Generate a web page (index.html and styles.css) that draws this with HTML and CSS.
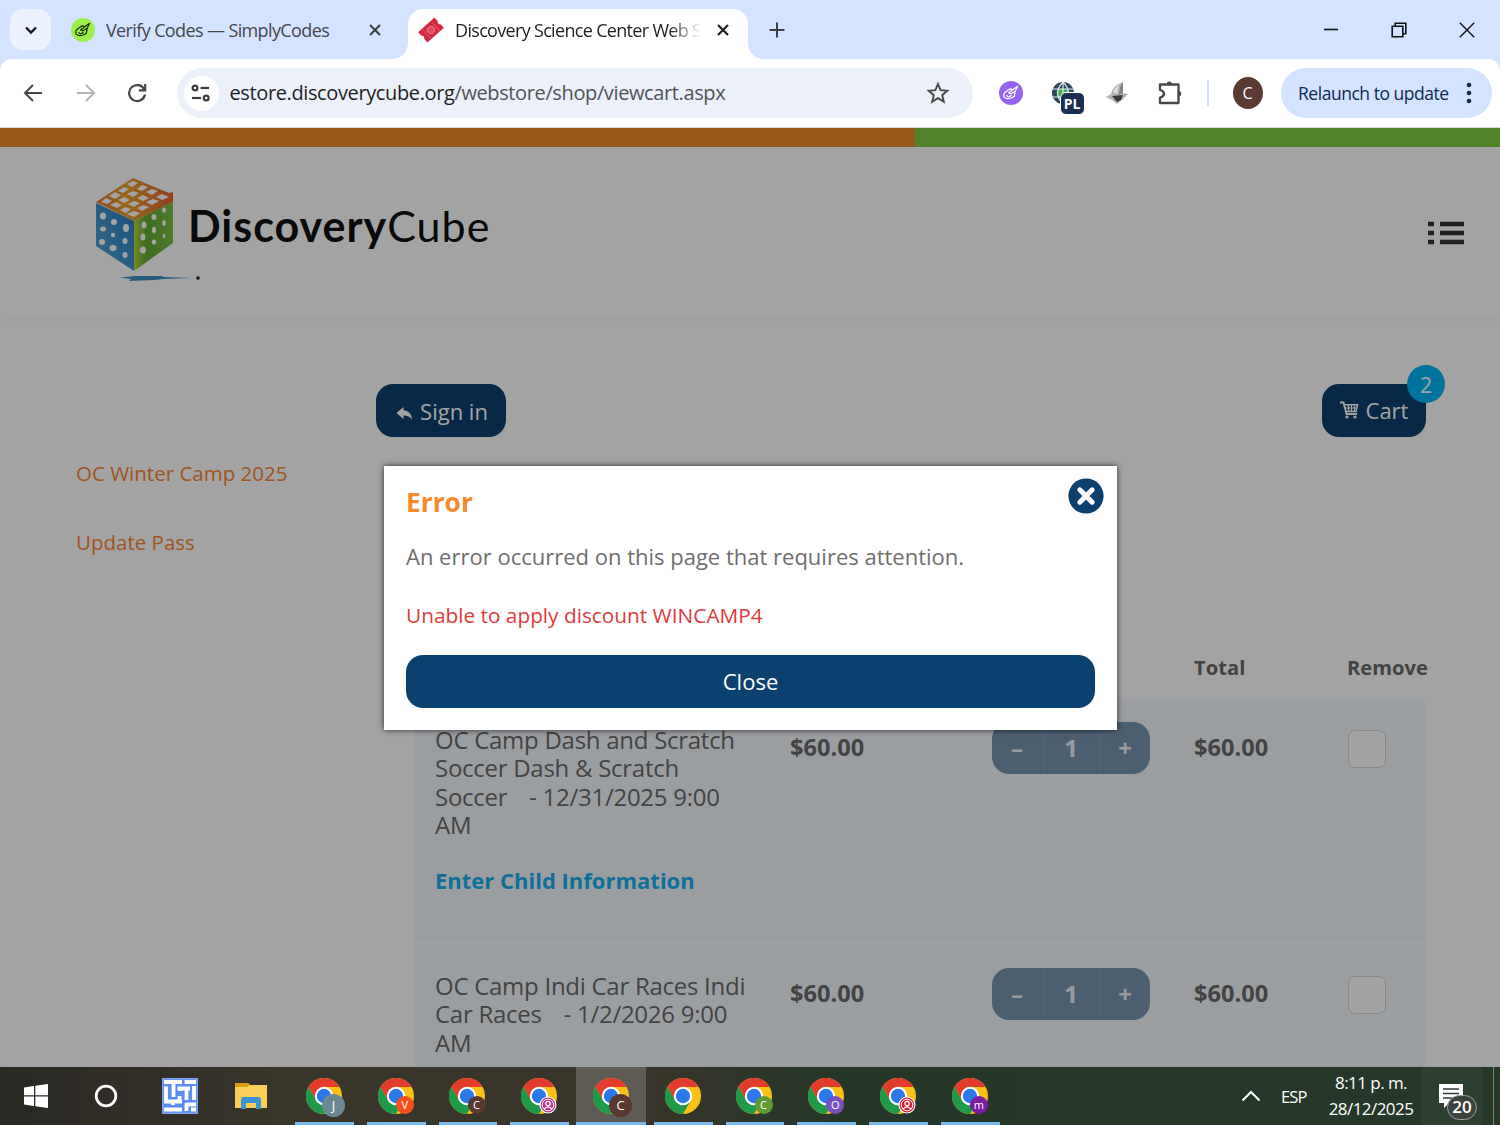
FILE: index.html
```html
<!DOCTYPE html>
<html lang="en">
<head>
  <meta charset="utf-8">
  <title>Discovery Science Center Web Store</title>
  <link rel="stylesheet" href="styles.css">
</head>
<body>
  <!-- shared icons -->
  <svg class="defs" width="0" height="0">
    <symbol id="chrome" viewBox="0 0 36 36">
      <circle cx="18" cy="18" r="18" fill="#fbc116"/>
      <path d="M18 9 H33.6 A18 18 0 0 0 2.4 9 L10.2 22.5 Z" fill="#e33b2e"/>
      <path d="M2.4 9 A18 18 0 0 0 18 36 L25.8 22.5 L10.2 22.5 Z" fill="#1f9a48"/>
      <circle cx="18" cy="18" r="9.2" fill="#fff"/>
      <circle cx="18" cy="18" r="7.2" fill="#2b78e8"/>
    </symbol>
    <symbol id="hand" viewBox="0 0 24 24">
      <path d="M5 11 L11 7 L14 8 L20 4 M20 4 L17 10 L12 13 L9 12 L13 9 M5 11 Q2 14 4 17 Q7 20 12 18 L16 16 L17 10 M7 15 Q9 18 12 15" fill="none" stroke="currentColor" stroke-width="1.5" stroke-linecap="round" stroke-linejoin="round"/>
    </symbol>
    <symbol id="person" viewBox="0 0 18 18">
      <circle cx="9" cy="9" r="8" fill="currentColor" stroke="#fff" stroke-width="1.2"/>
      <circle cx="9" cy="9" r="5.8" fill="none" stroke="#fff"/>
      <circle cx="9" cy="7.6" r="2.2" fill="none" stroke="#fff" stroke-width="1.2"/>
      <path d="M5 13.2 Q9 8.5 13 13.2" fill="none" stroke="#fff" stroke-width="1.2"/>
    </symbol>
  </svg>

  <div class="tabstrip">
    <div class="tab-search">
      <svg width="14" height="10" viewBox="0 0 14 10"><path d="M2 2.5 L7 7.5 L12 2.5" fill="none" stroke="#1c1c1f" stroke-width="2.4"/></svg>
    </div>
    <div class="tab">
      <span class="favicon green"><svg width="20" height="20"><use href="#hand"/></svg></span>
      <span class="tab-title first">Verify Codes — SimplyCodes</span>
      <svg class="tab-close" width="14" height="14" viewBox="0 0 14 14"><path d="M2 2 L12 12 M12 2 L2 12" stroke="#3c4043" stroke-width="2"/></svg>
    </div>
    <div class="tab active">
      <svg class="ticket" width="26" height="26" viewBox="0 0 26 26">
        <g transform="rotate(-42 13 13)">
          <path d="M2 6 H24 V11 A2.2 2.2 0 0 0 24 15 V20 H2 V15 A2.2 2.2 0 0 0 2 11 Z" fill="#d3283f"/>
          <path d="M7 6.500 V19.500 M19 6.500 V19.500" stroke="#de5064" stroke-width="1"/>
          <circle cx="13" cy="13" r="3.5" fill="#e24a5c" stroke="#ea7a88"/>
        </g>
      </svg>
      <span class="tab-title second">Discovery Science Center Web Store</span>
      <svg class="tab-close" width="14" height="14" viewBox="0 0 14 14"><path d="M2 2 L12 12 M12 2 L2 12" stroke="#1f1f1f" stroke-width="2.2"/></svg>
    </div>
    <svg class="new-tab" width="16" height="16" viewBox="0 0 16 16"><path d="M8 .5 V15.5 M.5 8 H15.5" stroke="#3c4043" stroke-width="2"/></svg>
    <div class="window-buttons">
      <svg width="16" height="16" viewBox="0 0 16 16"><path d="M1 7.5 H15" stroke="#111" stroke-width="1.6"/></svg>
      <svg width="16" height="16" viewBox="0 0 16 16"><path d="M1.2 4.2 H11.8 V14.8 H1.2 Z M4.2 4 V1.2 H14.8 V11.8 H12" fill="none" stroke="#111" stroke-width="1.6"/></svg>
      <svg width="16" height="16" viewBox="0 0 16 16"><path d="M.8 .8 L15.2 15.2 M15.2 .8 L.8 15.2" stroke="#111" stroke-width="1.4"/></svg>
    </div>
  </div>

  <div class="toolbar-wrap">
  <div class="toolbar">
    <svg class="nav-icon" width="20" height="20" viewBox="0 0 20 20"><path d="M19 10 H2 M10 2 L2 10 L10 18" fill="none" stroke="#474747" stroke-width="2"/></svg>
    <svg class="nav-icon" width="20" height="20" viewBox="0 0 20 20"><path d="M1 10 H18 M10 2 L18 10 L10 18" fill="none" stroke="#b4b4b4" stroke-width="2"/></svg>
    <svg class="nav-icon" width="20" height="20" viewBox="0 0 20 20"><path d="M16.3 6.500 A8 8 0 1 0 17 11.500 M17.200 1 V7.300 H10.800" fill="none" stroke="#474747" stroke-width="2.2"/></svg>
    <div class="omnibox">
      <span class="site-info">
        <svg width="20" height="18" viewBox="0 0 20 18"><g fill="none" stroke="#3c3c3c" stroke-width="2.200"><circle cx="4" cy="4" r="2.4"/><path d="M9.5 4 H18"/><circle cx="15.200" cy="14" r="2.4"/><path d="M1 14 H10"/></g></svg>
      </span>
      <span class="url"><span class="host">estore.discoverycube.org</span>/webstore/shop/viewcart.aspx</span>
      <svg class="star" width="24" height="24" viewBox="0 0 24 24"><path d="M12 3 L14.6 9.2 L21.3 9.8 L16.2 14.2 L17.8 20.8 L12 17.2 L6.2 20.8 L7.8 14.2 L2.7 9.8 L9.4 9.2 Z" fill="none" stroke="#474747" stroke-width="1.9"/></svg>
    </div>
    <div class="extensions">
      <span class="favicon purple"><svg width="20" height="20"><use href="#hand"/></svg></span>
      <span class="globe">
        <svg width="24" height="24" viewBox="0 0 24 24"><circle cx="12" cy="12" r="11" fill="#2b465d"/><rect x="7" y="8" width="10" height="9" fill="#43b04d"/><path d="M1 8 H23 M1 16 H23 M12 1 V23 M12 1 Q1 12 12 23 M12 1 Q23 12 12 23" fill="none" stroke="#dfe8ee" stroke-width="1.2"/></svg>
        <b>PL</b>
      </span>
      <svg class="mask" width="22" height="26" viewBox="0 0 22 26">
        <path d="M17 2 Q6 6 5 14 L0 17 L6 20 L11 24 L17 19 L22 14 L17 13 Z" fill="#b4b4b4"/>
        <path d="M17 2 Q13 7 13 15 L17 13 Z" fill="#848484"/>
        <path d="M6 16 L17 15 L15 20 L11 22 Z" fill="#3a3a3a"/>
        <path d="M7 12 Q9 7 13 5 L11 14 Z" fill="#ddd"/>
      </svg>
      <svg class="puzzle" width="26" height="26" viewBox="0 0 26 26"><path d="M3 4.500 H21.500 V23 H3 V17.500 Q7 16.500 7 13.700 Q7 11 3 10 Z" fill="none" stroke="#474747" stroke-width="2.3" stroke-linejoin="round"/><path d="M9.500 4 A2.800 3 0 0 1 15 4 Z M22 11 A3 2.800 0 0 1 22 16.500 Z" fill="#474747"/></svg>
      <span class="divider"></span>
      <span class="avatar">C</span>
    </div>
    <div class="relaunch">
      <span>Relaunch to update</span>
      <svg width="6" height="22" viewBox="0 0 6 22"><g fill="#0d2a52"><circle cx="3" cy="3" r="2.3"/><circle cx="3" cy="11" r="2.3"/><circle cx="3" cy="19" r="2.3"/></g></svg>
    </div>
  </div>
  </div>

  <div class="page">
    <div class="stripe"><span></span></div>
    <header>
      <div class="logo">
        <svg width="112" height="106" viewBox="0 0 112 106">
          <defs>
            <linearGradient id="gt" x1="0" x2="1"><stop offset="0" stop-color="#e8762c"/><stop offset=".4" stop-color="#e8a32e"/><stop offset="1" stop-color="#e3652a"/></linearGradient>
            <linearGradient id="gl" x1="0" y1="1" x2="1" y2="0"><stop offset="0" stop-color="#4fa9dc"/><stop offset="1" stop-color="#2f7cba"/></linearGradient>
            <linearGradient id="gr" x1="0" x2="1"><stop offset="0" stop-color="#b4dc3a"/><stop offset=".3" stop-color="#62ac36"/><stop offset="1" stop-color="#7cc043"/></linearGradient>
          </defs>
          <path d="M1 25 L38 1 L74 16 L78 15 L78 25 L39 44 Z" fill="url(#gt)"/>
          <path d="M1 26 L39 44 V94 L1 69 Z" fill="url(#gl)"/>
          <path d="M39 44 L78 25 V66 L39 94 Z" fill="url(#gr)"/>
          <g fill="#fff">
            <path d="M38 4l5 2-6 4-5-3z M47 8l6 2-6 4-5-2z M57 12l6 2-6 4-6-3z M67 17l7 3-7 3-6-3z"/>
            <path d="M29 10l5 2-6 4-5-2z M38 14l6 2-6 4-6-3z M48 18l6 3-6 3-6-3z M58 22l6 2-7 4-6-3z"/>
            <path d="M20 15l6 3-6 4-6-3z M29 20l6 3-6 3-6-3z M39 24l6 2-6 4-6-3z M48 28l6 2-7 4-5-3z"/>
            <path d="M11 21l6 3-5 3-6-2z M21 25l6 3-5 3-7-3z M30 30l6 2-5 4-6-3z M39 34l6 2-6 4-7-3z"/>
            <ellipse cx="8" cy="39" rx="3" ry="3.5"/><ellipse cx="19" cy="45" rx="3" ry="3"/><ellipse cx="31" cy="51" rx="3" ry="4"/>
            <ellipse cx="8" cy="52" rx="3" ry="2.5"/><ellipse cx="18" cy="58" rx="2.2" ry="2.2"/><ellipse cx="30" cy="64" rx="2.5" ry="3"/>
            <ellipse cx="7" cy="65" rx="3" ry="3"/><ellipse cx="18" cy="71" rx="3.5" ry="3"/><ellipse cx="30" cy="78" rx="2.5" ry="3"/>
            <ellipse cx="49" cy="48" rx="2.5" ry="3.5"/><ellipse cx="59" cy="40" rx="2.5" ry="3"/><ellipse cx="69" cy="33" rx="2" ry="2.5"/>
            <ellipse cx="48" cy="60" rx="2.5" ry="3.5"/><ellipse cx="59" cy="53" rx="2" ry="3.2"/><ellipse cx="69" cy="46" rx="1.8" ry="3"/>
            <ellipse cx="48" cy="73" rx="3" ry="3.5"/><ellipse cx="59" cy="65" rx="2.2" ry="2.5"/><ellipse cx="69" cy="59" rx="1.3" ry="2.2"/>
          </g>
          <path d="M25 100.500 L40 99 L68 99 V100 L97 101 L68 102 L60 103 L34 104 L36 102 Z" fill="#3a8fc4"/>
          <circle cx="103" cy="101" r="1.8" fill="#222"/>
        </svg>
        <span class="wordmark"><b>Discovery</b>Cube</span>
      </div>
      <svg class="menu" width="36" height="24" viewBox="0 0 36 24"><path d="M0 3 H6 M12 3 H36 M0 12 H6 M12 12 H36 M0 21 H6 M12 21 H36" stroke="#333" stroke-width="4.600"/></svg>
    </header>

    <main>
      <aside>
        <a>OC Winter Camp 2025</a>
        <a>Update Pass</a>
      </aside>
      <section>
        <div class="actions">
          <div class="btn signin">
            <svg width="17" height="14" viewBox="0 0 17 14"><path d="M.5 7 L7.500 1 V4.300 Q15 4.500 16 13.500 Q13 9.500 7.500 9.600 V13 Z" fill="#fff"/></svg>
            Sign in
          </div>
          <div class="btn cart">
            <svg width="19" height="18" viewBox="0 0 19 18"><path d="M0 1.500 H3.500 L6.500 13 H17" fill="none" stroke="#fff" stroke-width="1.8"/><path d="M4.500 3.800 H17.500 L16 10.500 H6" fill="none" stroke="#fff" stroke-width="1.6"/><path d="M5 7 H17 M8.500 4 V10 M11.500 4 V10 M14.500 4 V10" stroke="#fff" stroke-width="1.2"/><circle cx="7" cy="16" r="1.6" fill="#fff"/><circle cx="15" cy="16" r="1.6" fill="#fff"/></svg>
            Cart
            <span class="badge">2</span>
          </div>
        </div>
        <div class="cart-table">
          <div class="row head">
            <span></span><span></span><span></span><span>Total</span><span>Remove</span>
          </div>
          <div class="row">
            <div class="item">
              <p>OC Camp Dash and Scratch<br>Soccer Dash &amp; Scratch<br>Soccer &nbsp; <span class="date-part">- 12/31/2025 9:00</span><br>AM</p>
              <a>Enter Child Information</a>
            </div>
            <span class="price">$60.00</span>
            <div class="qty"><i>–</i><i>1</i><i>+</i></div>
            <span class="price">$60.00</span>
            <span class="check"></span>
          </div>
          <div class="row">
            <div class="item">
              <p>OC Camp Indi Car Races Indi<br>Car Races &nbsp; <span class="date-part">- 1/2/2026 9:00</span><br>AM</p>
            </div>
            <span class="price">$60.00</span>
            <div class="qty"><i>–</i><i>1</i><i>+</i></div>
            <span class="price">$60.00</span>
            <span class="check"></span>
          </div>
        </div>
      </section>
    </main>

    <div class="overlay"></div>
    <div class="modal">
      <div class="modal-head">
        <h2>Error</h2>
        <svg width="36" height="36" viewBox="0 0 36 36"><circle cx="18" cy="18" r="17.6" fill="#0b416f"/><path d="M11.800 11.800 L24.200 24.200 M24.200 11.800 L11.800 24.200" stroke="#fff" stroke-width="5" stroke-linecap="round"/></svg>
      </div>
      <p class="message">An error occurred on this page that requires attention.</p>
      <p class="reason">Unable to apply discount WINCAMP4</p>
      <div class="close-btn">Close</div>
    </div>
  </div>

  <div class="taskbar">
    <div class="task"><svg width="24" height="24" viewBox="0 0 24 24"><path d="M0 3.500 L10 2 V11.300 H0 Z M11.300 1.800 L24 0 V11.300 H11.300 Z M0 12.600 H10 V22 L0 20.500 Z M11.300 12.600 H24 V24 L11.300 22.200 Z" fill="#fff"/></svg></div>
    <div class="task search"><svg width="24" height="24" viewBox="0 0 24 24"><circle cx="12" cy="12" r="9.8" fill="none" stroke="#fff" stroke-width="2.8"/></svg></div>
    <div class="task maze"><svg width="36" height="36" viewBox="0 0 36 36"><rect width="36" height="36" fill="#7ba3f2"/><rect x="1.500" y="1.500" width="33" height="33" fill="#5b8df0"/><path d="M2 4 H20 M11.500 4 V19 M4 8.500 V22 M22.500 4 H34 M15.500 10.500 H28 M32 8 V22 M18 10 V13 M24.500 10 V22 M4 25.500 V23.500 H20 M17.500 23 V18 M2 31.500 H20 M11 24 V27 M24.500 26.500 H34 M24.500 25 V33 M29 31.500 H34" fill="none" stroke="#fff" stroke-width="3.800"/></svg></div>
    <div class="task"><svg width="32" height="28" viewBox="0 0 32 28"><path d="M0 1 H13 L15 3 H32 V26 H0 Z" fill="#f9cf57"/><path d="M0 1 H13 L15 3 L12 5 H0 Z" fill="#dd9b13"/><path d="M6 27 V18 Q6 15 9 15 H23 Q26 15 26 18 V27 H21 V21 H11 V27 Z" fill="#3b92d4"/></svg></div>
    <div class="task open"><svg width="36" height="36"><use href="#chrome"/></svg><span class="dot big slate">J</span></div>
    <div class="task open"><svg width="36" height="36"><use href="#chrome"/></svg><span class="dot orange">V</span></div>
    <div class="task open"><svg width="36" height="36"><use href="#chrome"/></svg><span class="dot brown">C</span></div>
    <div class="task open"><svg width="36" height="36"><use href="#chrome"/></svg><svg class="dot pink"><use href="#person"/></svg></div>
    <div class="task open current"><svg width="36" height="36"><use href="#chrome"/></svg><span class="dot big brown">C</span></div>
    <div class="task open"><svg width="36" height="36"><use href="#chrome"/></svg></div>
    <div class="task open"><svg width="36" height="36"><use href="#chrome"/></svg><span class="dot olive">C</span></div>
    <div class="task open"><svg width="36" height="36"><use href="#chrome"/></svg><span class="dot violet">O</span></div>
    <div class="task open"><svg width="36" height="36"><use href="#chrome"/></svg><svg class="dot red"><use href="#person"/></svg></div>
    <div class="task open"><svg width="36" height="36"><use href="#chrome"/></svg><span class="dot plum">m</span></div>
    <div class="tray">
      <svg width="20" height="12" viewBox="0 0 20 12"><path d="M1.500 10.500 L10 2 L18.500 10.500" fill="none" stroke="#fff" stroke-width="2"/></svg>
      <span class="lang">ESP</span>
      <div class="clock"><span class="time">8:11 p. m.</span><span class="date">28/12/2025</span></div>
      <div class="notify">
        <svg width="24" height="24" viewBox="0 0 24 24"><path d="M0 0 H24 V19 H10 L5 24 V19 H0 Z" fill="#fff"/><path d="M4 5 H20 M4 9.500 H20 M4 14 H14" stroke="#2d3d31" stroke-width="1.6"/></svg>
        <span class="count">20</span>
      </div>
      <span class="peek"></span>
    </div>
  </div>
</body>
</html>
```
FILE: styles.css
```css
* {
  box-sizing: border-box;
}

body {
  margin: 0;
  width: 1500px;
  height: 1125px;
  overflow: hidden;
  display: flex;
  flex-direction: column;
  font-family: "Open Sans", "Noto Sans", sans-serif;
  background: #fff;
}

svg {
  display: block;
  flex: none;
}

p, h2 {
  margin: 0;
}

.defs {
  position: absolute;
}

/* Tab strip */
.tabstrip {
  height: 59px;
  flex: none;
  background: #d4e3ff;
  display: flex;
  align-items: center;
  padding-left: 10px;
  color: #45474a;
}

.tab-search {
  width: 41px;
  height: 41px;
  border-radius: 13px;
  background: #ebf1fd;
  display: flex;
  align-items: center;
  justify-content: center;
  margin-right: 20px;
}

.tab {
  display: flex;
  align-items: center;
  width: 337px;
}

.favicon {
  width: 24px;
  height: 24px;
  border-radius: 50%;
  display: flex;
  align-items: center;
  justify-content: center;
}

.favicon.green {
  background: #9bef4a;
  color: #16300c;
}

.favicon.purple {
  background: #9564f3;
  color: #fff;
}

.tab-title {
  font-size: 18px;
  white-space: nowrap;
  overflow: hidden;
  line-height: 26px;
}

.tab-title.first {
  width: 228px;
  margin: 0 34px 0 11px;
  letter-spacing: -0.62px;
}

.tab-title.second {
  width: 246px;
  margin: 0 15px 0 11px;
  color: #1f1f1f;
  letter-spacing: -0.68px;
  -webkit-mask-image: linear-gradient(to right, #000 215px, transparent 246px);
  mask-image: linear-gradient(to right, #000 215px, transparent 246px);
}

.tab.active {
  position: relative;
  align-self: flex-end;
  width: 340px;
  height: 50px;
  padding: 0 0 8px 10px;
  background: #fff;
  border-radius: 15px 15px 0 0;
}

.tab.active::before,
.tab.active::after {
  content: "";
  position: absolute;
  bottom: 0;
  width: 15px;
  height: 15px;
}

.tab.active::before {
  left: -15px;
  background: radial-gradient(circle at 0 0, transparent 14.5px, #fff 15px);
}

.tab.active::after {
  right: -15px;
  background: radial-gradient(circle at 100% 0, transparent 14.5px, #fff 15px);
}

.new-tab {
  margin-left: 21px;
}

.window-buttons {
  margin-left: auto;
  padding-right: 25px;
  display: flex;
  gap: 52px;
}

/* Toolbar */
.toolbar-wrap {
  background: #d4e3ff;
  flex: none;
}

.toolbar {
  height: 69px;
  background: #fff;
  border-radius: 12px 12px 0 0;
  border-bottom: 1px solid #d5d5d5;
  display: flex;
  align-items: center;
  padding: 0 8px 0 23px;
}

.nav-icon {
  margin-right: 32.5px;
}

.omnibox {
  width: 796px;
  height: 50px;
  margin-left: -4px;
  border-radius: 25px;
  background: #ebf0f9;
  display: flex;
  align-items: center;
  padding: 0 23px 0 7px;
}

.site-info {
  width: 35px;
  height: 35px;
  border-radius: 50%;
  background: #fff;
  display: flex;
  align-items: center;
  justify-content: center;
}

.url {
  margin-left: 11px;
  padding-bottom: 1px;
  font-size: 20px;
  letter-spacing: -0.38px;
  color: #505357;
}

.host {
  color: #1f1f1f;
}

.star {
  margin-left: auto;
}

.extensions {
  display: flex;
  align-items: center;
  margin-left: 26px;
}

.globe {
  position: relative;
  margin-left: 28px;
}

.globe b {
  position: absolute;
  left: 9px;
  top: 11px;
  width: 25px;
  height: 23px;
  border-radius: 6px;
  border: 1px solid #fff;
  background: #192e50;
  color: #fff;
  font: bold 14px/21px "Open Sans", sans-serif;
  text-align: center;
}

.mask {
  margin-left: 31px;
}

.puzzle {
  margin-left: 29px;
}

.divider {
  width: 2px;
  height: 26px;
  margin-left: 24px;
  background: #d0e0fb;
}

.avatar {
  width: 30px;
  height: 32px;
  margin-left: 24px;
  border-radius: 50%;
  background: #5b3a33;
  color: #fff;
  font-size: 16px;
  line-height: 32px;
  text-align: center;
}

.relaunch {
  margin-left: auto;
  width: 211px;
  height: 50px;
  border-radius: 25px;
  background: #d4e3ff;
  color: #0d2a52;
  font-size: 17.5px;
  letter-spacing: -0.47px;
  white-space: nowrap;
  display: flex;
  align-items: center;
  justify-content: space-between;
  padding: 0 20px 0 17px;
}

.relaunch span {
  padding-bottom: 1px;
}

/* Store page */
.page {
  position: relative;
  flex: 1;
  min-height: 0;
  overflow: hidden;
  color: #6a6a6a;
}

.stripe {
  height: 19px;
  background: #82cb45;
}

.stripe span {
  display: block;
  width: 915px;
  height: 19px;
  background: #f08b28;
}

header {
  height: 171px;
  padding: 0 36px 0 95px;
  display: flex;
  align-items: center;
  justify-content: space-between;
  box-shadow: 0 2px 14px rgba(0, 0, 0, 0.04);
}

.logo {
  display: flex;
  align-items: flex-start;
  margin-top: -5px;
}

.wordmark {
  margin: 21px 0 0 -19px;
  font-family: Lato, sans-serif;
  font-size: 43px;
  line-height: 56px;
  letter-spacing: 1px;
  color: #111;
}

main {
  display: flex;
}

aside {
  width: 376px;
  padding: 140px 0 0 76px;
  font-size: 20.5px;
}

aside a {
  display: block;
  line-height: 30px;
  margin-bottom: 39px;
  color: #fa8430;
}

section {
  width: 1050px;
  padding-top: 66px;
}

.actions {
  display: flex;
  justify-content: space-between;
}

.btn {
  position: relative;
  height: 53px;
  border-radius: 17px;
  background: #0b416f;
  color: #fff;
  font-size: 22px;
  display: flex;
  align-items: center;
  justify-content: center;
  gap: 7px;
}

.signin {
  width: 130px;
  padding-left: 2px;
}

.signin svg {
  margin-top: 4px;
}

.cart {
  width: 104px;
  padding-bottom: 2px;
}

.badge {
  position: absolute;
  top: -19px;
  right: -19px;
  width: 38px;
  height: 38px;
  border-radius: 50%;
  background: #00b4f5;
  line-height: 38px;
  text-align: center;
}

.cart-table {
  margin: 197px 1px 0 38px;
}

.row {
  display: grid;
  grid-template-columns: 355px 202px 202px 154px auto;
  align-items: start;
  height: 246px;
  padding-left: 21px;
  background: #f2f8fc;
  border-bottom: 4px solid #f8fcff;
}

.row.head {
  height: 65px;
  background: none;
  border: 0;
  font-size: 20.2px;
  font-weight: bold;
  line-height: 66px;
}

.row.head span:last-child {
  margin-left: -1px;
}

.item {
  padding-top: 27px;
}

.item p {
  font-size: 24px;
  line-height: 28.3px;
  letter-spacing: -0.27px;
  white-space: nowrap;
}

.date-part {
  margin-left: 4px;
}

.item a {
  display: block;
  margin-top: 26px;
  font-size: 22px;
  font-weight: bold;
  line-height: 30px;
  color: #17aeef;
}

.price {
  padding-top: 32px;
  font-size: 23.6px;
  font-weight: bold;
  line-height: 32px;
}

.qty {
  width: 158px;
  height: 52px;
  margin-top: 23px;
  border-radius: 17px;
  background: #7795b1;
  color: #eef3f8;
  font-size: 24px;
  font-weight: bold;
  line-height: 51px;
  text-align: center;
  display: grid;
  grid-template-columns: 50px 56px 52px;
}

.qty i {
  font-style: normal;
}

.qty i + i {
  border-left: 2px solid #6ea0c4;
}

.check {
  width: 38px;
  height: 38px;
  margin-top: 31px;
  border: 1px solid #d5d5d5;
  border-radius: 7px;
  background: #fdfdfd;
}

.overlay {
  position: absolute;
  inset: 0;
  background: rgba(0, 0, 0, 0.36);
}

.modal {
  position: absolute;
  left: 384px;
  top: 338px;
  width: 733px;
  height: 264px;
  padding: 12px 22px 0;
  background: #fff;
  box-shadow: 0 0 6px rgba(0, 0, 0, 0.7);
}

.modal-head {
  display: flex;
  justify-content: space-between;
  height: 47px;
}

.modal-head svg {
  margin-right: -9px;
}

.modal h2 {
  font-size: 26.3px;
  line-height: 48px;
  color: #f58a2c;
}

.message {
  margin-top: 15px;
  font-size: 22px;
  line-height: 32px;
  color: #6e6e6e;
}

.reason {
  margin-top: 28px;
  font-size: 20.8px;
  line-height: 30px;
  color: #dc3b3b;
}

.close-btn {
  height: 53px;
  margin-top: 25px;
  border-radius: 17px;
  background: #0b416f;
  color: #fff;
  font-size: 22px;
  line-height: 53px;
  text-align: center;
}

/* Taskbar */
.taskbar {
  height: 58px;
  flex: none;
  display: flex;
  background: linear-gradient(to right, #292823 0, #3a362b 300px, #38352a 650px, #263729 830px, #26382a 1500px);
  color: #fff;
}

.task {
  position: relative;
  width: 71.75px;
  display: flex;
  align-items: center;
  justify-content: center;
}

.task.search {
  padding-right: 4px;
}

.task.maze,
.task.open {
  padding-left: 2px;
}

.task.open::after {
  content: "";
  position: absolute;
  left: 8px;
  right: 5px;
  bottom: 0;
  height: 3px;
  background: #76b9ed;
}

.task.current {
  background: linear-gradient(to right, transparent 2px, #5e5b54 2px);
}

.task.current::after {
  left: 2px;
  right: 0;
}

.dot {
  position: absolute;
  left: 37px;
  top: 29px;
  width: 18px;
  height: 18px;
  border-radius: 50%;
  font-size: 11px;
  line-height: 18px;
  text-align: center;
}

.dot.big {
  top: 27px;
  left: 35px;
  width: 23px;
  height: 23px;
  font-size: 13px;
  line-height: 23px;
}

.slate { background: #6b8794; }
.orange { background: #f4511e; }
.brown { background: #58382f; }
.pink { color: #c2338f; }
.olive { background: #5f9a33; }
.violet { background: #7a50c0; }
.red { color: #d8203c; }
.plum { background: #7b1fa2; }

.tray {
  margin-left: auto;
  display: flex;
  align-items: center;
}

.lang {
  margin-left: 20px;
  width: 28px;
  font-size: 16.5px;
  letter-spacing: -0.8px;
}

.clock {
  width: 86px;
  margin: 0 8px 0 19px;
  display: flex;
  flex-direction: column;
  align-items: center;
  font-size: 17px;
  line-height: 26px;
  letter-spacing: -0.55px;
  white-space: nowrap;
}

.notify {
  position: relative;
  width: 60px;
  height: 58px;
  padding: 17px 0 0 17px;
  background: #2d3f31;
}

.count {
  position: absolute;
  left: 25px;
  top: 28px;
  width: 30px;
  height: 25px;
  border: 1.5px solid #9aa09b;
  border-radius: 13px;
  background: #3c423d;
  font-size: 17px;
  font-weight: 600;
  line-height: 22px;
  text-align: center;
}

.peek {
  width: 7px;
  height: 58px;
  margin-left: 11px;
  border-left: 1px solid #7b867d;
}
```
